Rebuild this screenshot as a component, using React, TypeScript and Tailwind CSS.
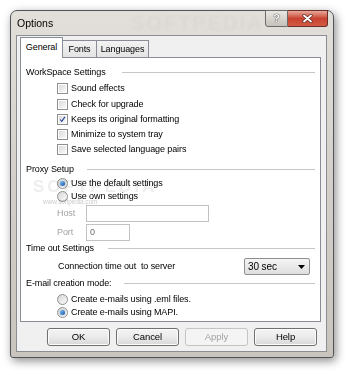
import React from "react";

function CheckBox({ checked }: { checked?: boolean }) {
  return (
    <div className="w-[11px] h-[11px] border border-[#8f8f8f] bg-white p-[1px] shrink-0">
      <div className="relative w-full h-full bg-gradient-to-br from-[#dcdcdc] to-[#f8f8f8]">
        {checked && (
          <svg viewBox="0 0 9 9" className="absolute inset-0 w-full h-full">
            <path d="M1.5 4.5 L3.6 6.8 L7.6 1.2" stroke="#21409a" strokeWidth="1.4" fill="none" />
          </svg>
        )}
      </div>
    </div>
  );
}

function Radio({ checked }: { checked?: boolean }) {
  return (
    <div className="w-[11px] h-[11px] rounded-full border border-[#8e8f8f] bg-gradient-to-br from-[#d6d6d6] to-[#fbfbfb] flex items-center justify-center shrink-0">
      {checked && (
        <div className="w-[5px] h-[5px] rounded-full bg-gradient-to-br from-[#7fc4f5] to-[#1a58a8] shadow-[0_0_1px_#2b6cb5]" />
      )}
    </div>
  );
}

function Header({ label, w, mt, h }: { label: string; w: number; mt?: string; h: string }) {
  return (
    <div className={`flex items-center pl-[5px] pr-[5px] ${h} ${mt ?? ""}`}>
      <div style={{ width: w }} className="shrink-0 whitespace-nowrap">
        {label}
      </div>
      <div className="flex-1 h-px bg-[#c6c6c6]" />
    </div>
  );
}

function Btn({ label, disabled }: { label: string; disabled?: boolean }) {
  return (
    <div
      className={`w-[63px] h-[18px] rounded-[3px] border flex items-center justify-center text-[9.5px] ${
        disabled
          ? "border-[#c4c4c4] text-[#a3a3a3] bg-[#f4f4f4]"
          : "border-[#707070] bg-gradient-to-b from-[#f4f4f4] via-[#ebebeb] to-[#d8d8d8] shadow-[inset_0_0_0_1px_#fcfcfc]"
      }`}
    >
      {label}
    </div>
  );
}

export default function App() {
  return (
    <div className="w-[350px] h-[375px] bg-white pl-[10px] pt-[10px] font-['Liberation_Sans',Arial,sans-serif] text-[9px] tracking-[-0.1px] text-black leading-none">
      <div className="relative w-[324px] h-[348px] rounded-t-[7px] rounded-b-[3px] border border-[#50545a] bg-gradient-to-b from-[#e2dfda] via-[#d3cfc8] to-[#c9c4bc] shadow-[2px_3px_10px_rgba(0,0,0,0.45)] flex flex-col">
        {/* title bar */}
        <div className="relative h-[24px] flex items-center pl-[6px]">
          <span className="absolute left-[120px] top-[2px] text-[20px] font-bold tracking-[2px] text-[#d6d2cb] opacity-50 blur-[1px]">SOFTPEDIA</span>
          <span className="relative text-[10.5px] tracking-normal text-black">Options</span>
          <div className="absolute right-[5px] top-[-1px] flex">
            <div className="w-[23px] h-[17px] rounded-bl-[3px] border border-[#6b6b6b] bg-gradient-to-b from-[#e9e7e3] to-[#c6c1b9] flex items-center justify-center">
              <span className="text-[11px] font-bold text-white [text-shadow:0_0_1px_#333,0_0_1px_#333]">?</span>
            </div>
            <div className="w-[40px] h-[17px] rounded-br-[3px] border border-l-0 border-[#6b2f28] bg-gradient-to-b from-[#e8a89c] via-[#c84330] to-[#d35a42] flex items-center justify-center">
              <svg width="11" height="9" viewBox="0 0 11 9">
                <path d="M2 1.5 L9 7.5 M9 1.5 L2 7.5" stroke="#5a2a24" strokeWidth="3.2" strokeLinecap="round" />
                <path d="M2 1.5 L9 7.5 M9 1.5 L2 7.5" stroke="#ffffff" strokeWidth="1.8" strokeLinecap="round" />
              </svg>
            </div>
          </div>
        </div>
        {/* client */}
        <div className="ml-[5px] mr-[6px] mb-[5px] flex-1 border border-[#8a8d91] bg-[#f0f0f0] pl-[3px] pr-[5px] pt-[1px] flex flex-col">
          {/* tabs */}
          <div className="flex items-end h-[20px]">
            <div className="relative z-10 w-[43px] h-[21px] -mb-px bg-white border border-b-0 border-[#898c95] flex items-center justify-center pb-[2px]">
              General
            </div>
            <div className="w-[34px] h-[17px] border-t border-r border-[#898c95] bg-gradient-to-b from-[#f3f3f3] to-[#e3e3e3] flex items-center justify-center">
              Fonts
            </div>
            <div className="w-[52px] h-[17px] border-t border-r border-[#898c95] bg-gradient-to-b from-[#f3f3f3] to-[#e3e3e3] flex items-center justify-center">
              Languages
            </div>
          </div>
          {/* panel */}
          <div className="relative h-[265px] border border-[#898c95] bg-white flex flex-col pt-[6px]">
            <Header label="WorkSpace Settings" w={96} h="h-[16px]" />
            <div className="flex items-center gap-[3px] pl-[36px] h-[17px]">
              <CheckBox />
              <span>Sound effects</span>
            </div>
            <div className="flex items-center gap-[3px] pl-[36px] h-[15px]">
              <CheckBox />
              <span>Check for upgrade</span>
            </div>
            <div className="flex items-center gap-[3px] pl-[36px] h-[15px]">
              <CheckBox checked />
              <span>Keeps its original formatting</span>
            </div>
            <div className="flex items-center gap-[3px] pl-[36px] h-[15px]">
              <CheckBox />
              <span>Minimize to system tray</span>
            </div>
            <div className="flex items-center gap-[3px] pl-[36px] h-[15px]">
              <CheckBox />
              <span>Save selected language pairs</span>
            </div>
            <Header label="Proxy Setup" w={61} h="h-[16px]" mt="mt-[4px]" />
            <div className="flex items-center gap-[3px] pl-[36px] h-[13px]">
              <Radio checked />
              <span>Use the default settings</span>
            </div>
            <div className="flex items-center gap-[3px] pl-[36px] h-[13px]">
              <Radio />
              <span>Use own settings</span>
            </div>
            <div className="flex items-center pl-[36px] mt-[2px] h-[17px]">
              <span className="w-[29px] text-[#a3a3a3]">Host</span>
              <div className="w-[123px] h-[17px] border border-[#c2c2c2] bg-white" />
            </div>
            <div className="flex items-center pl-[36px] mt-[2px] h-[17px]">
              <span className="w-[29px] text-[#a3a3a3]">Port</span>
              <div className="w-[44px] h-[17px] border border-[#c2c2c2] bg-white flex items-center pl-[3px] text-[#6d6d6d]">
                0
              </div>
            </div>
            <Header label="Time out Settings" w={82} h="h-[14px]" />
            <div className="flex items-center justify-between pl-[37px] pr-[10px] mt-[3px] h-[17px]">
              <span>Connection time out&nbsp; to server</span>
              <div className="w-[66px] h-[17px] rounded-[2px] border border-[#8e8f8f] bg-gradient-to-b from-[#f5f5f5] to-[#dedede] flex items-center justify-between pl-[3px] pr-[4px]">
                <span className="text-[10px]">30 sec</span>
                <svg width="7" height="4" viewBox="0 0 7 4">
                  <path d="M0 0 H7 L3.5 4 Z" fill="#000" />
                </svg>
              </div>
            </div>
            <Header label="E-mail creation mode:" w={98} h="h-[16px]" />
            <div className="flex items-center gap-[3px] pl-[36px] mt-[2px] h-[13px]">
              <Radio />
              <span>Create e-mails using .eml files.</span>
            </div>
            <div className="flex items-center gap-[3px] pl-[36px] h-[12px]">
              <Radio checked />
              <span>Create e-mails using MAPI.</span>
            </div>
            <span className="absolute left-[12px] top-[120px] text-[17px] font-bold tracking-[3px] text-[#eeeeee] mix-blend-multiply pointer-events-none">SOFTPEDIA</span>
            <span className="absolute left-[22px] top-[141px] text-[6.5px] text-[#cccccc] mix-blend-multiply pointer-events-none">www.softpedia.com</span>
          </div>
          {/* buttons */}
          <div className="flex justify-end gap-[6px] mt-[6px] pr-[4px]">
            <Btn label="OK" />
            <Btn label="Cancel" />
            <Btn label="Apply" disabled />
            <Btn label="Help" />
          </div>
        </div>
      </div>
    </div>
  );
}
